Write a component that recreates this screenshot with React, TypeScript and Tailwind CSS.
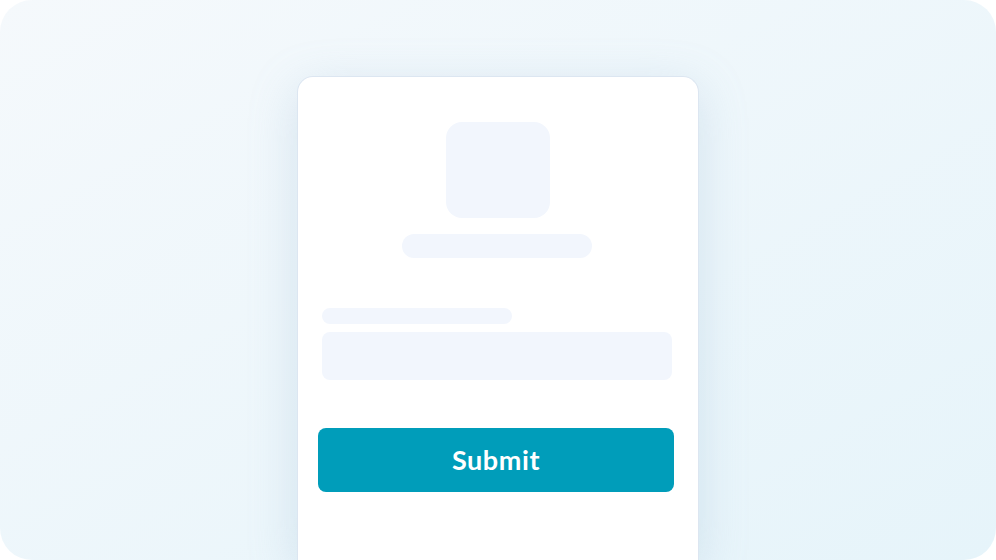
export default function App() {
  return (
    <div className="w-[996px] h-[560px] bg-white">
      <div className="h-full rounded-[32px] overflow-hidden bg-gradient-to-br from-[#f5f9fc] to-[#e6f4fa] flex justify-center pt-[76px]">
        <div className="w-[402px] h-full bg-white border border-b-0 border-[#dce6f1] rounded-t-[16px] shadow-[0_12px_48px_rgba(140,175,205,0.28)] pl-6 pr-[26px] pt-[45px] flex flex-col">
          <div className="flex flex-col items-center">
            <div className="ml-0.5 w-[104px] h-[96px] rounded-[16px] bg-[#f2f6fd]" />
            <div className="mt-4 w-[190px] h-6 rounded-full bg-[#f2f6fd]" />
          </div>
          <div className="mt-[50px] w-[190px] h-4 rounded-full bg-[#f2f6fd]" />
          <div className="mt-2 h-12 rounded-lg bg-[#f2f6fd]" />
          <button className="mt-12 -ml-1 w-[356px] h-16 rounded-lg bg-[#009dba] text-white text-[27px] font-bold font-['Lato','Open_Sans',sans-serif] tracking-[0.6px]">
            Submit
          </button>
        </div>
      </div>
    </div>
  )
}
